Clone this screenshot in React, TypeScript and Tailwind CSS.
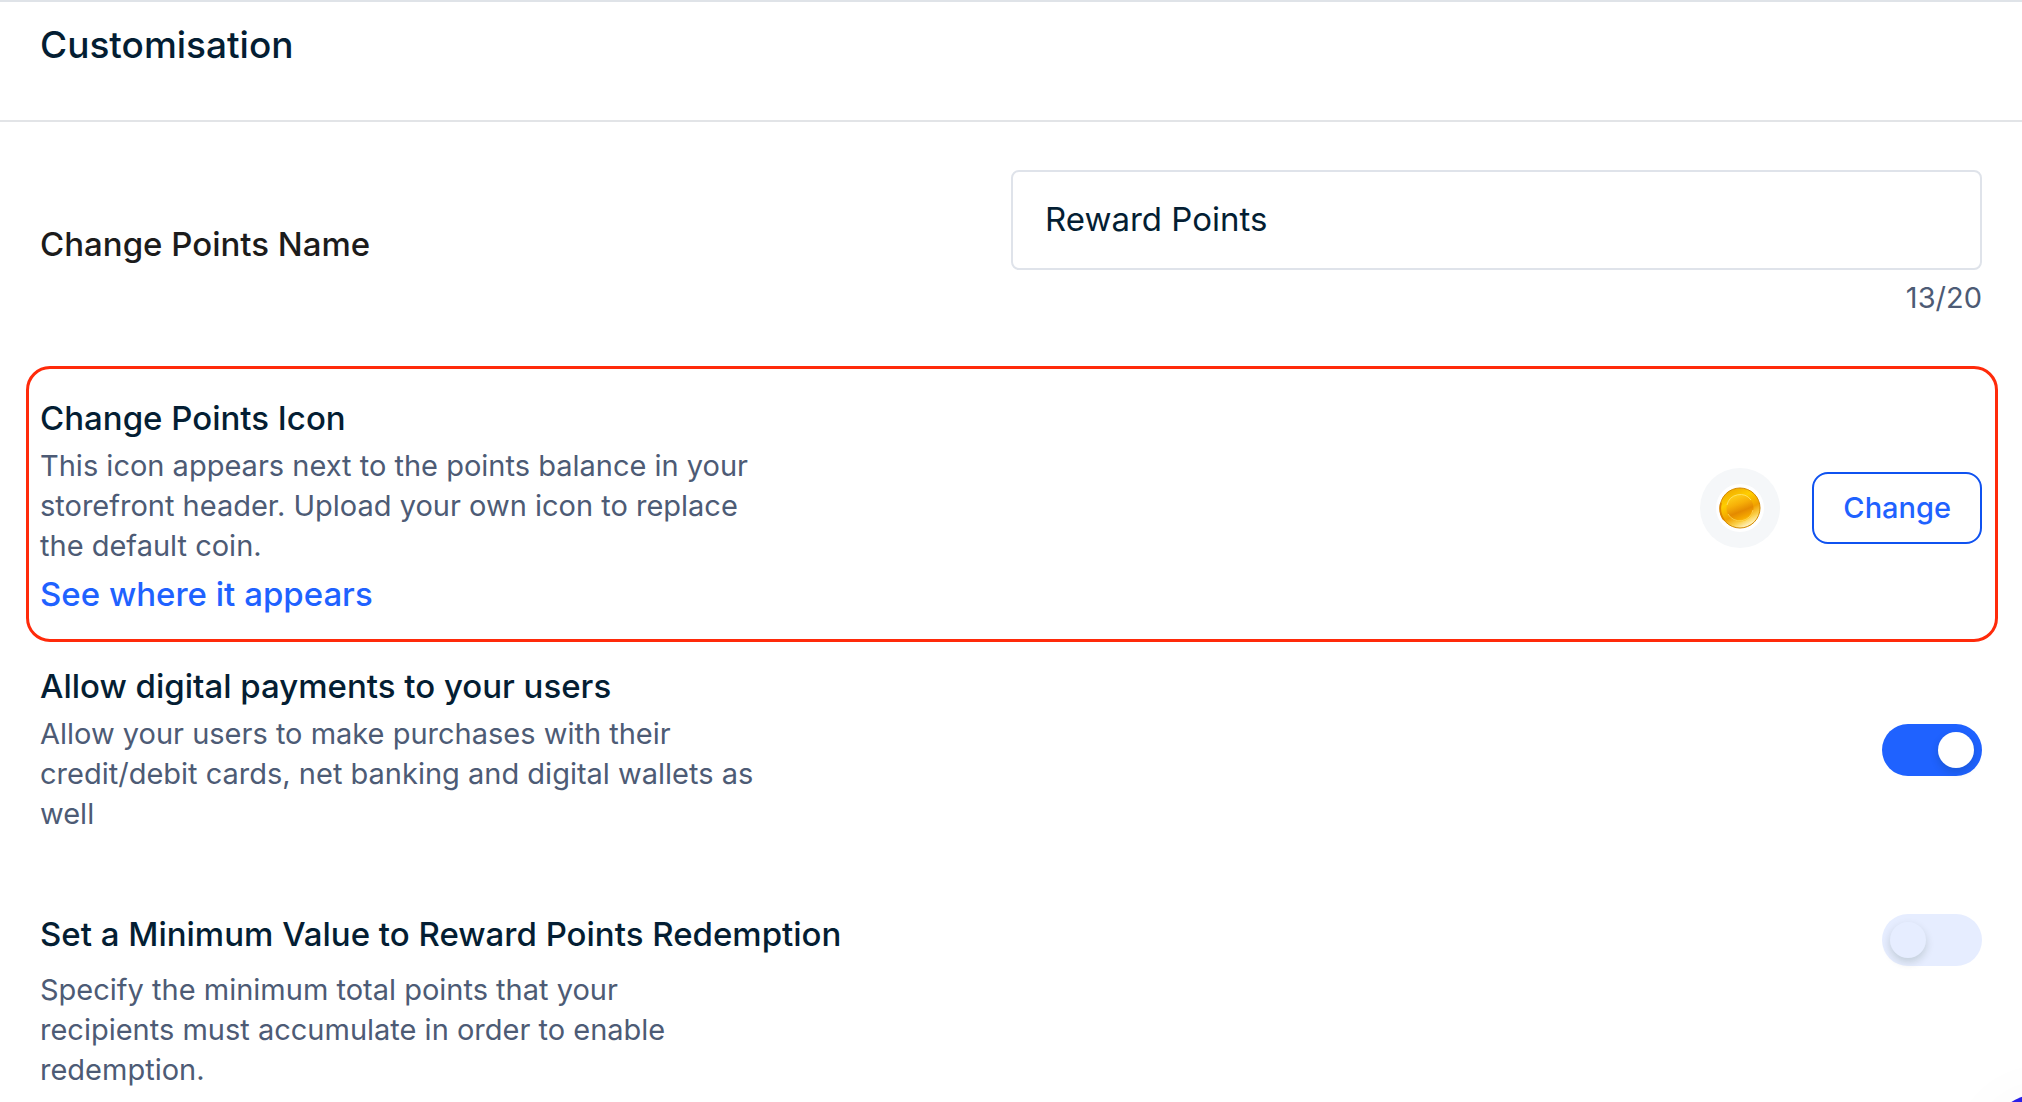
import { useState } from 'react';

function CoinIcon() {
  return (
    <svg viewBox="0 0 48 48" className="size-12" aria-hidden="true">
      <defs>
        <linearGradient id="coin-rim" x1="0.25" y1="0" x2="0.75" y2="1">
          <stop offset="0" stopColor="#efa800" />
          <stop offset="0.3" stopColor="#ffce00" />
          <stop offset="0.6" stopColor="#f0a000" />
          <stop offset="0.78" stopColor="#fbd04a" />
          <stop offset="0.92" stopColor="#fff0b8" />
          <stop offset="1" stopColor="#e39a10" />
        </linearGradient>
        <linearGradient id="coin-face" x1="0.3" y1="0" x2="0.7" y2="1">
          <stop offset="0" stopColor="#ffd21a" />
          <stop offset="0.35" stopColor="#f7b008" />
          <stop offset="0.62" stopColor="#e48a00" />
          <stop offset="0.85" stopColor="#f5a800" />
          <stop offset="1" stopColor="#ffca1c" />
        </linearGradient>
      </defs>
      <circle cx="24" cy="24" r="24" fill="#fff" />
      <circle cx="24" cy="24" r="20" fill="url(#coin-rim)" stroke="#d48a00" strokeWidth="1" />
      <path d="M5 19a20 20 0 0 0 3 17" fill="none" stroke="#dd8500" strokeWidth="1.8" />
      <circle cx="24" cy="24" r="13.5" fill="url(#coin-face)" />
      <path d="M11 21a13.5 13.5 0 0 1 24-5" fill="none" stroke="#ffe672" strokeWidth="0.8" />
      <path d="M37 26a13.5 13.5 0 0 1-25 4" fill="none" stroke="#ffd95a" strokeWidth="0.8" />
    </svg>
  );
}

interface ToggleProps {
  id: string;
  checked: boolean;
  onChange: (checked: boolean) => void;
}

function Toggle({ id, checked, onChange }: ToggleProps) {
  return (
    <input
      id={id}
      type="checkbox"
      role="switch"
      checked={checked}
      onChange={(e) => onChange(e.target.checked)}
      className="h-[52px] w-[100px] shrink-0 cursor-pointer appearance-none rounded-full bg-[#e6edff] p-2 before:block before:size-9 before:rounded-full before:bg-[#e6edff] before:shadow-[0_4px_8px_rgba(0,35,11,0.16)] checked:bg-[#1f62ff] checked:before:ml-auto checked:before:bg-white"
    />
  );
}

export default function App() {
  const [name, setName] = useState('Reward Points');
  const [digitalPayments, setDigitalPayments] = useState(true);
  const [minimumValue, setMinimumValue] = useState(false);

  return (
    <main className="border-t-2 border-[#dfe3e8] bg-white font-['Inter',sans-serif] text-[29px] leading-10 text-[#4d5b75]">
      <header className="border-b-2 border-[#e2e4e7] px-10 pt-[19px] pb-[51px]">
        <h1 className="text-[37px] leading-12 font-medium text-[#041e33]">Customisation</h1>
      </header>

      {/* Points name */}
      <div className="grid grid-cols-2 items-center px-10 pt-12">
        <label htmlFor="points-name" className="text-[33px] font-medium text-[#1c1c1c]">
          Change Points Name
        </label>
        <div>
          <input
            id="points-name"
            type="text"
            maxLength={20}
            value={name}
            onChange={(e) => setName(e.target.value)}
            className="block h-[100px] w-full rounded-lg border-2 border-[#dfe3ea] px-8 pb-0.5 text-[33px] text-[#041e33]"
          />
          <p className="mt-2 text-right">{name.length}/20</p>
        </div>
      </div>

      {/* Points icon */}
      <section className="mt-12 mr-6 ml-[26px] flex items-center justify-between rounded-3xl border-3 border-[#ff2a0a] pt-[29px] pr-[13px] pb-[21px] pl-[11px]">
        <div>
          <h2 className="text-[33px] font-medium text-[#041e33]">Change Points Icon</h2>
          <p className="mt-2 w-[728px]">
            This icon appears next to the points balance in your storefront header. Upload your own icon to replace the default coin.
          </p>
          <a href="#preview" className="mt-1 block w-fit text-[33px] leading-12 font-medium text-[#1f62ff]">
            See where it appears
          </a>
        </div>
        <div className="flex items-center gap-8">
          <div className="flex size-20 items-center justify-center rounded-full bg-[#f5f7f9]">
            <CoinIcon />
          </div>
          <button type="button" className="h-[72px] rounded-2xl border-2 border-[#0f52f0] px-[29px] font-medium text-[#1f62ff]">
            Change
          </button>
        </div>
      </section>

      {/* Digital payments */}
      <section className="mt-6 flex items-center justify-between px-10">
        <div>
          <label htmlFor="digital-payments" className="block w-fit text-[33px] font-medium text-[#041e33]">
            Allow digital payments to your users
          </label>
          <p className="mt-2 w-[728px]">
            Allow your users to make purchases with their credit/debit cards, net banking and digital wallets as well
          </p>
        </div>
        <Toggle id="digital-payments" checked={digitalPayments} onChange={setDigitalPayments} />
      </section>

      {/* Minimum redemption value */}
      <section className="mt-20 flex items-start justify-between px-10">
        <div>
          <label htmlFor="minimum-value" className="block w-fit text-[33px] font-medium text-[#041e33]">
            Set a Minimum Value to Reward Points Redemption
          </label>
          <p className="mt-4 w-[640px]">
            Specify the minimum total points that your recipients must accumulate in order to enable redemption.
          </p>
        </div>
        <Toggle id="minimum-value" checked={minimumValue} onChange={setMinimumValue} />
      </section>

      {/* Chat launcher */}
      <button
        type="button"
        aria-label="Open chat"
        className="fixed -right-[81px] -bottom-[111px] size-[120px] rounded-full bg-[#2a1fe8] shadow-[0_2px_64px_rgba(9,14,21,0.03)]"
      />
    </main>
  );
}
